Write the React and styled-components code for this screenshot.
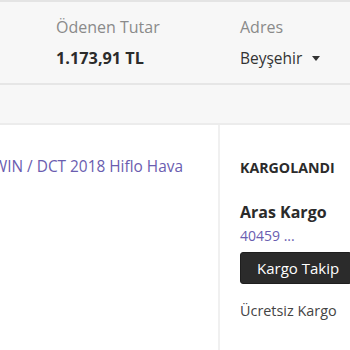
import React from "react";
import styled, { createGlobalStyle } from "styled-components";

const Global = createGlobalStyle`
  html, body { margin: 0; padding: 0; background: #fff; }
  body { font-family: "Open Sans", "Noto Sans", sans-serif; color: #333; width: 350px; height: 350px; overflow: hidden; }
`;

const Summary = styled.div`
  border-top: 2px solid #e4e4e4;
  border-bottom: 2px solid #e6e6e6;
  background: #f7f7f7;
  height: 81px;
  display: grid;
  grid-template-columns: 184px 1fr;
  padding-left: 56px;
  box-sizing: content-box;
`;

const Field = styled.div`
  display: flex;
  flex-direction: column;
  padding-top: 14px;
  gap: 9px;
`;

const Label = styled.div`
  font-size: 16px;
  line-height: 22px;
  color: #8a8a8a;
`;

const Value = styled.div`
  font-size: ${(p) => (p.$bold ? "16.3px" : "15.5px")};
  line-height: 22px;
  color: ${(p) => (p.$bold ? "#2b2b2b" : "#333")};
  font-weight: ${(p) => (p.$bold ? 700 : 400)};
  display: flex;
  align-items: center;
  gap: 10px;
`;

const Caret = styled.span`
  width: 0;
  height: 0;
  border-left: 4px solid transparent;
  border-right: 4px solid transparent;
  border-top: 5px solid #333;
  margin-top: 1px;
`;

const Spacer = styled.div`
  height: 38px;
  background: #f7f7f7;
  border-bottom: 2px solid #ececec;
`;

const Body = styled.div`
  display: flex;
  height: 230px;
`;

const ProductCol = styled.div`
  width: 220px;
  flex: none;
  overflow: hidden;
  border-right: 2px solid #f0f0f0;
  padding-top: 31px;
  box-sizing: border-box;
`;

const ProductLink = styled.a`
  display: block;
  white-space: nowrap;
  margin-left: -7px;
  font-size: 15.4px;
  line-height: 22px;
  color: #6a5db0;
  text-decoration: none;
`;

const ShipCol = styled.div`
  padding-left: 20px;
  padding-top: 33px;
  display: flex;
  flex-direction: column;
  align-items: flex-start;
`;

const Status = styled.div`
  font-size: 14.2px;
  font-weight: 700;
  line-height: 20px;
  color: #2b2b2b;
`;

const Carrier = styled.div`
  margin-top: 23px;
  font-size: 16px;
  font-weight: 700;
  line-height: 22px;
  color: #2b2b2b;
`;

const Tracking = styled.div`
  font-size: 14px;
  line-height: 20px;
  color: #6a5db0;
  margin-top: 3px;
`;

const TrackButton = styled.button`
  margin-top: 6px;
  height: 32px;
  width: 112px;
  padding: 0 16px;
  background: #2b2b2b;
  color: #fff;
  border: 1px solid #1e1e1e;
  border-radius: 3px;
  font-family: inherit;
  font-size: 15px;
  text-align: left;
  white-space: nowrap;
`;

const Note = styled.div`
  margin-top: 17px;
  font-size: 14.4px;
  line-height: 20px;
  color: #444;
`;

export default function App() {
  return (
    <>
      <Global />
      <Summary>
        <Field>
          <Label>Ödenen Tutar</Label>
          <Value $bold>1.173,91 TL</Value>
        </Field>
        <Field>
          <Label>Adres</Label>
          <Value>
            Beyşehir <Caret />
          </Value>
        </Field>
      </Summary>
      <Spacer />
      <Body>
        <ProductCol>
          <ProductLink href="#">WIN / DCT 2018 Hiflo Hava</ProductLink>
        </ProductCol>
        <ShipCol>
          <Status>KARGOLANDI</Status>
          <Carrier>Aras Kargo</Carrier>
          <Tracking>40459 ...</Tracking>
          <TrackButton>Kargo Takip</TrackButton>
          <Note>Ücretsiz Kargo</Note>
        </ShipCol>
      </Body>
    </>
  );
}
